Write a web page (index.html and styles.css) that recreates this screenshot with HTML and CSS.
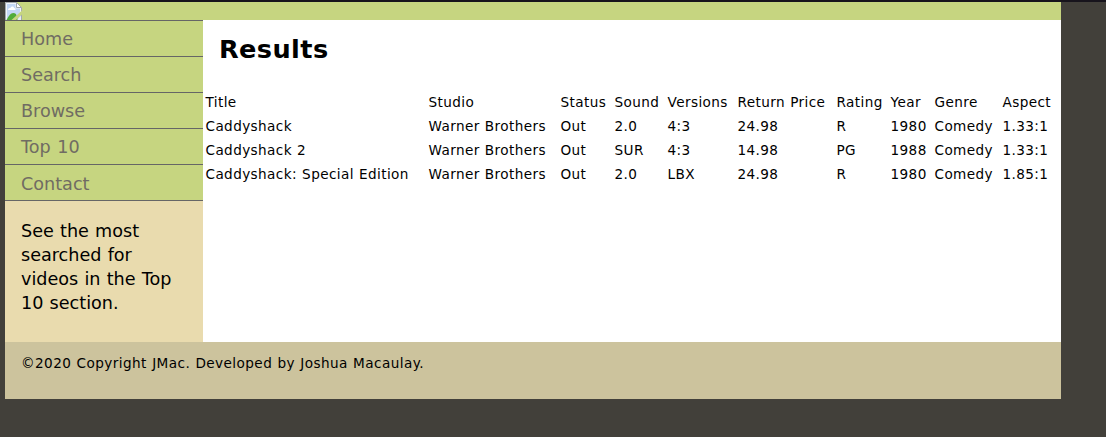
FILE: index.html
```
<!DOCTYPE html>
<html lang="en">
<head>
<meta charset="utf-8">
<title>Results</title>
<link rel="stylesheet" href="styles.css">
</head>
<body>
<div class="page">
<header class="banner">
<svg class="logo" width="17" height="18" viewBox="0 0 17 18">
<path d="M.5 .5H11.500L16.500 5.500V18H.5Z" fill="#c3d6f5" stroke="#a3a7ad"/>
<path d="M1.500 18V1.500H11V6H15.500V10" fill="none" stroke="#f1f4fa"/>
<path d="M11.500 .5V5.500H16.500Z" fill="#fff" stroke="#a3a7ad"/>
<path d="M3 8C3 6 5 6 5.500 6C6 4 9 4 9 6C11 6 11 8 10 8Z" fill="#fff"/>
<path d="M1.500 18C4 13 7 9 11 12L13 18Z" fill="#51ab3a"/>
<path d="M6.500 18L17 8.500V12.500L11 18Z" fill="#c6d580"/>
<path d="M12 18L16 14V18Z" fill="#e9edf2"/>
</svg>
</header>
<div class="content">
<aside class="side">
<nav class="nav">
<a class="nav-link">Home</a>
<a class="nav-link">Search</a>
<a class="nav-link">Browse</a>
<a class="nav-link">Top 10</a>
<a class="nav-link last">Contact</a>
</nav>
<p class="note">See the most<br>searched for<br>videos in the Top<br>10 section.</p>
</aside>
<main class="main">
<h1 class="heading">Results</h1>
<table class="results">
<colgroup><col class="c-title"><col class="c-studio"><col class="c-status"><col class="c-sound"><col class="c-versions"><col class="c-price"><col class="c-rating"><col class="c-year"><col class="c-genre"><col class="c-aspect"></colgroup>
<tbody>
<tr><td>Title</td><td>Studio</td><td>Status</td><td>Sound</td><td>Versions</td><td>Return Price</td><td>Rating</td><td>Year</td><td>Genre</td><td>Aspect</td></tr>
<tr><td>Caddyshack</td><td>Warner Brothers</td><td>Out</td><td>2.0</td><td>4:3</td><td>24.98</td><td>R</td><td>1980</td><td>Comedy</td><td>1.33:1</td></tr>
<tr><td>Caddyshack 2</td><td>Warner Brothers</td><td>Out</td><td>SUR</td><td>4:3</td><td>14.98</td><td>PG</td><td>1988</td><td>Comedy</td><td>1.33:1</td></tr>
<tr><td>Caddyshack: Special Edition</td><td>Warner Brothers</td><td>Out</td><td>2.0</td><td>LBX</td><td>24.98</td><td>R</td><td>1980</td><td>Comedy</td><td>1.85:1</td></tr>
</tbody>
</table>
</main>
</div>
<footer class="footer">©2020 Copyright JMac. Developed by Joshua Macaulay.</footer>
</div>
</body>
</html>
```
FILE: styles.css
```
body {
  margin: 0;
  min-height: 435px;
  border-top: 2px solid #17141c;
  background: #42403a;
  font-family: "DejaVu Sans", Verdana, sans-serif;
  color: #000;
}
.page { width: 1056px; margin-left: 5px; }
.banner { height: 18px; background: #c6d580; }
.logo { display: block; }
.content { display: flex; height: 322px; background: #fff; }
.side { width: 198px; background: #e9dbae; }
.nav { display: flex; flex-direction: column; border-bottom: 1px solid #666; background: #c6d580; }
.nav-link {
  height: 35px;
  padding-left: 16px;
  border-top: 1px solid #666;
  font-size: 17.6px;
  line-height: 36px;
  word-spacing: 1px;
  color: #706c63;
}
.last { line-height: 38px; }
.note { margin: 18px 0 0 16px; font-size: 17.6px; line-height: 24px; word-spacing: 0.6px; white-space: nowrap; }
.main { flex: 1; }
.heading { margin: 13px 0 0 16px; font-size: 25.6px; line-height: 32px; letter-spacing: 0.4px; }
.results {
  width: 854px;
  margin: 25px 0 0 2.5px;
  table-layout: fixed;
  border-collapse: collapse;
  font-size: 13.6px;
  letter-spacing: 0.4px;
  word-spacing: 0.4px;
}
.results td { height: 24px; padding: 0; line-height: 24px; white-space: nowrap; }
.c-title { width: 223px; }
.c-studio { width: 132px; }
.c-status { width: 54px; }
.c-sound { width: 53px; }
.c-versions { width: 70px; }
.c-price { width: 99px; }
.c-rating { width: 54px; }
.c-year { width: 44px; }
.c-genre { width: 68px; }
.c-aspect { width: 57px; }
.footer {
  height: 57px;
  padding-left: 16px;
  box-sizing: border-box;
  background: #ccc39d;
  font-size: 13.6px;
  letter-spacing: 0.43px;
  word-spacing: 0.5px;
  line-height: 42px;
}
```
